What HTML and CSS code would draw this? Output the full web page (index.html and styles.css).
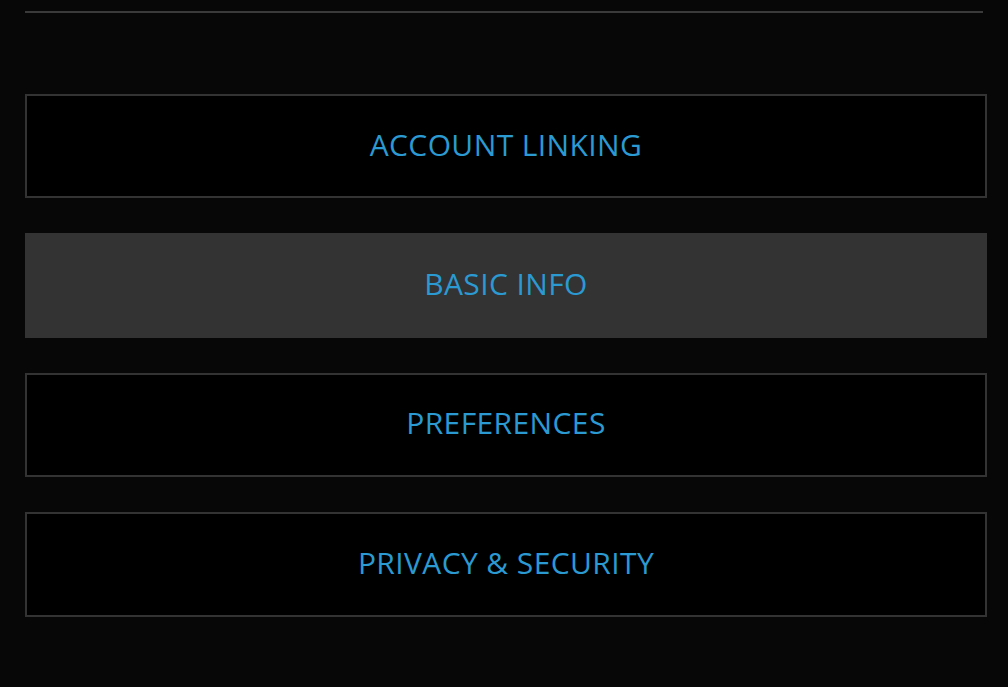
FILE: index.html
```html
<!DOCTYPE html>
<html>
<head>
<meta charset="utf-8">
<link rel="stylesheet" href="styles.css">
</head>
<body>
<div class="page">
  <hr class="divider">
  <nav class="menu">
    <a class="item">ACCOUNT LINKING</a>
    <a class="item active">BASIC INFO</a>
    <a class="item">PREFERENCES</a>
    <a class="item">PRIVACY &amp; SECURITY</a>
  </nav>
</div>
</body>
</html>
```
FILE: styles.css
```css
html, body {
  margin: 0;
  padding: 0;
  background: #070707;
  height: 100%;
  overflow: hidden;
}
.page {
  padding: 11px 21px 0 25px;
  font-family: "Open Sans", "Liberation Sans", sans-serif;
}
.divider {
  margin: 0 4px 0 0;
  border: 0;
  height: 2px;
  background: #3a3a3a;
}
.menu {
  display: flex;
  flex-direction: column;
  gap: 35px;
  margin-top: 81px;
}
.item {
  box-sizing: border-box;
  height: 104.4px;
  padding-bottom: 4px;
  border: 2px solid #333333;
  background: #000;
  display: flex;
  align-items: center;
  justify-content: center;
  color: #2b9ad2;
  font-size: 30px;
  font-weight: 500;
  letter-spacing: 0.4px;
}
.item.active {
  background: #333333;
  border-color: #333333;
}
```
